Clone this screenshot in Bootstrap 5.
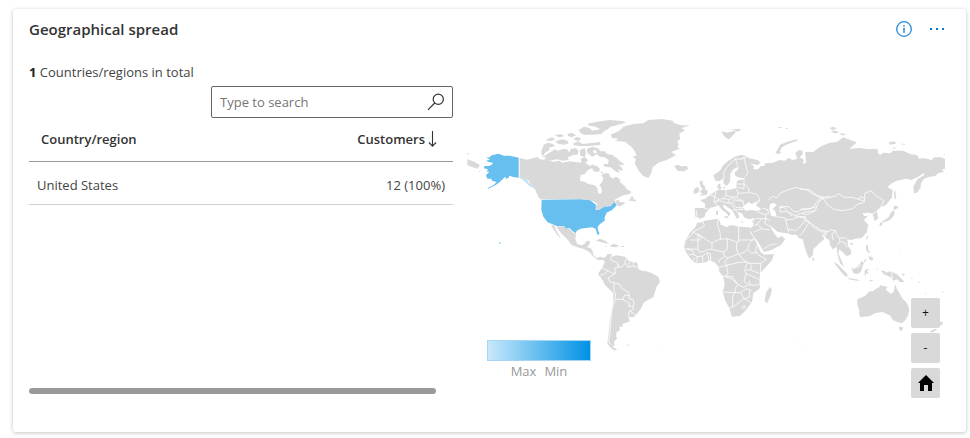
<!DOCTYPE html>
<html lang="en">
<head>
<meta charset="utf-8">
<meta name="viewport" content="width=device-width, initial-scale=1">
<title>Geographical spread</title>
<link href="https://cdn.jsdelivr.net/npm/bootstrap@5.3.0/dist/css/bootstrap.min.css" rel="stylesheet">
<style>
body{font-family:"Open Sans","Noto Sans",sans-serif;font-size:13px;line-height:20px;color:#444;background:#fff}
.geo-card{margin:9px 4px 6px 13px;border:0;border-radius:3px;box-shadow:0 1px 4px rgba(0,0,0,.24)}
.geo-head{padding:0 19px 2px 16px;height:42px}
.geo-title{font-size:15px;line-height:20px;font-weight:600;color:#333}
.head-tools{gap:13px}
.tool-btn{width:20px;height:20px;line-height:0}
.geo-body{padding:0 21px 24px 16px;gap:14px}
.list-pane{flex:424 1 0;padding-top:11px}
.map-pane{flex:478 1 0;padding-top:59px;padding-bottom:48px}
.map-pane .world{display:block;width:100%;height:auto}
.borders{fill:none;stroke:#fbfbfb;stroke-width:2.6}
.total-line{word-spacing:normal}
.total-line strong{color:#222}
.search-box{width:242px;height:32px;border:1px solid #666;border-radius:2px;margin-top:4px;padding:0 7px 0 8px}
.search-box input{border:0;outline:0;background:none;min-width:0;color:#444}
.search-box input::placeholder{color:#767676;opacity:1}
.geo-table{color:#444;margin-bottom:183px}
.geo-table th{font-weight:600;color:#333;padding:11px 12px;height:43px;border-bottom:1px solid #999}
.geo-table th:last-child{padding-right:16px}
.geo-table td{padding:13px 8px 9px;height:43px;border-bottom:1px solid #d0d0d0}
.sort-btn{font-size:13px;line-height:20px;font-weight:600;color:#333;gap:3px;vertical-align:top}
.scroll-thumb{height:6px;width:96%;border-radius:3px;background:#999}
.map-legend{left:20px;bottom:27px;width:104px;color:#999;text-align:center}
.legend-ramp{height:21px;border:1px solid #a5d6f5;background:linear-gradient(90deg,#c8e8fb,#0092e5)}
.map-tools{right:5px;bottom:10px;gap:5px}
.map-tools button{width:29px;height:30px;border:0;border-radius:2px;background:#d9d9d9;color:#111;font-size:12px;padding:0}
</style>
<script src="https://cdn.jsdelivr.net/npm/bootstrap@5.3.0/dist/js/bootstrap.bundle.min.js"></script>
</head>
<body>
<main class="card geo-card">
  <header class="geo-head d-flex align-items-center justify-content-between">
    <h1 class="geo-title mb-0">Geographical spread</h1>
    <div class="d-flex head-tools">
      <button type="button" class="btn p-0 border-0 tool-btn" aria-label="Information">
        <svg width="18" height="18" viewBox="0 0 18 18" fill="none" stroke="#2488d8"><circle cx="9" cy="9" r="7.3" stroke-width="1.3"/><path d="M9 7.7v5M9 5v1.5" stroke-width="1.5"/></svg>
      </button>
      <button type="button" class="btn p-0 border-0 tool-btn" aria-label="More options">
        <svg width="18" height="18" viewBox="0 0 18 18" fill="#0078d4"><path d="M2 8h2v2H2zM8 8h2v2H8zM14 8h2v2h-2z"/></svg>
      </button>
    </div>
  </header>
  <div class="geo-body d-flex">
    <section class="list-pane">
      <p class="mb-0 total-line"><strong>1</strong> Countries/regions in total</p>
      <div class="search-box d-flex align-items-center ms-auto">
        <input type="search" class="flex-grow-1 p-0" placeholder="Type to search" aria-label="Search countries">
        <svg width="18" height="18" viewBox="0 0 18 18" fill="none" stroke="#333" stroke-width="1.2" aria-hidden="true"><circle cx="11.3" cy="6.2" r="5.1"/><path d="M7.7 10 1 16.8"/></svg>
      </div>
      <table class="w-100 geo-table">
        <thead><tr><th scope="col">Country/region</th><th scope="col" class="text-end"><button type="button" class="btn p-0 border-0 sort-btn d-inline-flex align-items-center">Customers <svg width="9" height="18" viewBox="0 0 9 18" fill="none" stroke="#333" stroke-width="1.1" aria-hidden="true"><path d="M4.5 1v15M1 12.5l3.5 3.7L8 12.5"/></svg></button></th></tr></thead>
        <tbody><tr><td>United States</td><td class="text-end">12 (100%)</td></tr></tbody>
      </table>
      <div class="scroll-thumb"></div>
    </section>
    <section class="map-pane position-relative">
      <svg class="world" viewBox="467 110 478 250" role="img" aria-label="World map of customers" fill="#d9d9d9" stroke-linejoin="round">
        <!-- North America -->
        <g transform="translate(460 110) scale(.33333)">
          <path d="M22 148 40 154 60 166 52 176 34 170 22 166ZM22 130l8 2-8 2Z"/>
          <path d="M179 143 200 149 232 141 240 148 262 150 280 155 300 152 306 158 330 154 350 157 365 158 362 146 374 142 385 150 376 158 390 168 400 162 402 172 384 180 374 192 362 195 360 212 375 216 385 222 404 226 412 234 414 248 420 252 426 246 424 234 418 226 428 214 430 204 424 196 436 188 448 192 450 200 460 206 468 200 478 206 482 218 496 230 498 236 515 246 508 252 490 256 478 262 466 268 464 274 480 268 476 276 490 276 496 280 478 290 470 284 466 274 456 286 430 292 410 302 408 290 412 282 400 274 385 270 362 267 246 267 232 254 226 240 214 226 204 210 190 206 179 204Z"/>
          <path d="M236 256l10 8-2 5-10-8ZM506 272l10-14 4 4-1 5 8 2 1 6-8-2Z"/>
          <path d="M356 60 372 50 388 54 398 62 420 58 408 50 382 46 388 40 420 34 450 30 492 34 496 38 470 46 452 50 440 60 432 64 424 72 400 74 372 74 362 70Z"/>
          <path d="M250 104l14-6 14 4 8 6-22 6-14 2ZM244 122l6-12 14 2 6 8-12 6-10 12-4-6ZM266 130l18-12 10 4 12-4 14-2 8 10 8-2 2 12-14 6 2 8-16 2-20-4-20 4-18-4 6-6-12-2 10-4ZM256 90l20-8 10 6-16 6ZM286 94l22-6 14 4 4 8-12 4-20-2ZM322 72l14-4 12 8-12 6-12-4ZM340 88l10-8 14 6-10 8ZM338 102l16-8 14 8 20-2 32-4 2 8-34 4-30 0-14-2ZM330 118l18-4 8 10-4 10-14 0-8-6ZM360 120l14-6 4 14-4 14-14-6ZM284 76l18-4 12 6-16 4ZM364 148l10-8 4 6-8 6Z"/>
          <path d="M380 116 398 110 416 116 420 124 436 124 440 132 456 134 470 144 480 154 494 164 482 166 474 162 486 174 488 184 474 178 480 190 466 184 452 172 434 170 430 162 444 162 446 150 434 142 420 140 410 132 398 140 388 134 382 128ZM396 170l12-4 12 10-4 10-16-2ZM420 184l10 2-4 6Z"/>
          <path fill="#fff" d="M398 122l10-2 2 8-8 2ZM402 144l8 2-4 6Z"/>
          <path d="M272 344 282 346 290 364 302 384 296 380 280 358ZM278 343 290 349 312 349 319 357 328 356 337 366 348 372 346 388 352 402 362 406 374 402 378 394 390 392 388 404 380 412 392 414 398 424 400 436 410 444 420 440 432 444 440 448 430 450 414 450 400 440 388 426 370 416 358 414 334 404 324 390 302 368 288 348Z"/>
          <path d="M408 392 420 386 438 394 448 402 430 398ZM452 404l12-2 14 6-12 4-14-2ZM484 408l8 0 0 3-8 0ZM434 408l8 2-4 2Z"/>
          <g fill="#66bfef"><path d="M77 141 86 143 96 136 115 131 132 137 150 137 176 143V203L160 201 148 197 146 203 138 207 136 200 128 208 117 218 102 228 84 236 83 234 100 226 110 216 96 212 94 206 82 206 78 195 88 186 80 184 84 178 72 175 73 168 88 168 98 162 98 158 86 156 78 152 90 149Z"/>
          <path d="M245 269 362 268 390 271 408 284 407 300 416 300 432 291 452 288 464 276 470 286 456 300 440 308 434 322 434 332 420 342 413 350 414 360 419 372 412 374 407 356 396 352 378 354 362 356 350 362 348 370 338 364 328 354 318 356 312 348 290 348 274 341 262 336 250 320 244 300Z"/>
          <path d="M118 396l4 2-2 4-3-2ZM57 183l3 1-2 2Z"/></g>
          <path fill="#bfe3f8" d="M180 204 200 208 206 218 218 228 220 234 208 228 192 212Z"/>
          <path transform="translate(390 0)" d="M62 74 88 62 100 50 130 42 160 40 175 30 215 27 250 32 250 38 272 46 300 46 275 54 285 62 268 70 270 88 262 94 266 104 262 110 268 116 244 126 258 136 230 150 205 158 188 172 184 190 175 204 160 198 146 182 134 160 138 148 128 140 140 136 132 120 124 110 105 95 76 92 86 86 66 84ZM252 168 264 166 276 170 288 168 294 176 282 184 264 182Z"/>
        </g>
        <!-- Europe and western Asia -->
        <g transform="translate(670 110) scale(.33333)">
          <path d="M130 196 150 182 160 165 175 152 195 140 215 134 232 140 235 144 262 150 272 158 262 166 240 160 252 168 250 178 264 178 272 168 282 168 286 160 310 158 328 150 345 152 355 144 370 150 382 146 376 130 386 120 398 122 398 134 388 140 402 150 398 162 408 158 406 126 430 126 440 118 455 108 480 98V384L462 378 462 388 450 398 430 418 428 436 418 446 412 434 402 405 398 388 386 384 380 374 366 374 350 370 324 366 304 350 298 345 304 356 314 372 324 384 334 378 346 388 332 406 304 420 282 426 268 402 246 372 240 354 250 348 250 335 254 324 236 328 222 322 216 310 210 308 202 306 208 320 202 328 194 314 186 300 170 290 164 284 158 288 166 298 182 310 176 320 170 310 154 298 146 286 134 290 120 294 116 300 106 310 104 320 92 326 76 320 74 294 104 294 106 282 90 270 106 266 112 260 128 250 138 242 150 240 168 240 198 234 200 216 205 210 216 209 206 204 190 192 180 204 182 214 172 226 168 228 160 218 158 206 148 214 136 212Z"/>
          <path fill="#fff" d="M182 204 180 192 190 178 206 170 204 178 194 188 196 200 212 203 228 205 216 209 204 208 198 220 200 234 190 236 172 240 166 228 178 224ZM226 302 218 290 226 284 236 276 246 282 256 276 262 280 258 286 274 298 262 304 244 300ZM300 282 312 278 320 286 308 296 316 304 320 320 304 318 298 300Z"/>
          <path d="M143 224l8-4 0 8 4 8-8 4-5-8ZM158 232l8-2-2 8ZM88 214 98 212 98 222 104 228 106 238 114 244 110 254 88 258 98 250 88 246 98 238 92 230ZM74 236l8-6 6 8-4 10-12 4-2-8ZM14 168 24 164 32 170 50 168 54 176 42 184 24 182ZM154 64l18 4 20-6 6 4-8 8-12 14-10-4-8-8ZM184 58l30-1-10 8ZM316 130 324 116 330 104 350 96 380 88 382 92 354 102 336 112 330 122 334 130 322 132ZM160 320l14-2-2 8ZM138 302l6 0 0 14-6-2ZM212 334l12 2-8 2ZM244 334l8-3-4 5ZM326 52h10v2h-10ZM346 54h8v2h-8Z"/>
          <path class="borders" d="M158 218 162 200 160 190 170 172 184 158 196 146 210 148 232 140M196 146 204 170M210 148 222 142 228 170 234 188 226 200M222 204 222 222 236 234 236 246 262 254 270 270 256 278M200 222 222 222M204 232 222 236 222 222M200 236 204 250 236 248M168 240 168 256 182 260 200 262 204 250M138 244 134 260 146 268 160 266 168 256M118 254 134 260 132 274 150 272M132 274 140 286M78 300 82 322M102 294 118 300M146 268 140 278M160 266 176 268 190 264 196 270 184 280 166 278 150 272M196 270 220 274 222 286 220 294 198 292 190 280M184 280 190 292 202 306M190 300 220 298M200 262 220 274M176 268 178 280M270 270 262 280M276 294 292 298 296 310 286 314 262 306M286 314 288 326 256 326M288 326 284 340 302 350M274 328 262 342 252 346M262 342 276 356 300 360M276 356 252 366M288 326 300 332M324 366 322 384M282 416 302 404 320 402M296 270 308 258 320 264 330 250 352 240 378 232 400 238 420 240 440 256 462 262 446 276 440 290 420 296 396 296 386 306 370 304 356 290 330 290 330 306M330 306 350 304 376 318 392 310 410 314 436 302 440 290M320 320 346 324 352 352 356 368M346 330 368 328 388 320 406 320 404 332 392 348 380 362 354 358M388 320 376 318M404 332 418 336 408 352 398 368 388 378M418 336 428 344 452 360 480 366M436 302 398 308M328 292 342 292 366 318M464 368 458 384M462 262 480 258"/>
        </g>
        <!-- Eastern Asia -->
        <g transform="translate(800 110) scale(.33333)">
          <path d="M89 98 110 96 130 82 168 96 168 100 148 116 180 114 205 118 232 116 234 128 240 136 250 128 272 130 278 122 310 122 330 132 352 136 358 146 370 144 396 150 402 142 424 142 435 148V176L426 178 432 186 415 190 405 198 390 200 372 206 362 222 362 234 350 248 342 250 340 230 352 208 374 194 370 190 355 200 335 210 320 206 290 212 275 220 262 232 278 240 276 262 258 285 242 292 230 302 235 325 224 334 218 312 208 308 188 310 192 318 204 318 192 330 205 345 200 368 185 384 166 386 154 390 142 388 144 408 154 422 152 434 140 438 130 428 118 418 115 430 128 460 132 470 120 460 112 430 110 410 98 418 90 405 88 390 76 384 89 360Z"/>
          <path d="M286 240l2 22 2 4-6 0-2-18ZM282 288l10 0 4 4-12 8-4-4ZM276 304l8-2-2 14-12 14-16 6-14 2 14-8 12-8 4-10ZM240 338l8 2-4 8-6-2ZM88 54l14-4 8 6-12 4ZM92 62l18 0 6 6-14 2ZM120 70l14 1 4 4-14 1ZM266 98l12-4 12 4-6 4-14 2ZM302 101l14 0-2 3-10-1ZM278 112l12 2-10 2ZM152 398l8 2-4 6-6-3ZM202 376l3 2-4 12-3-4ZM433 131l3 0 0 4-3-1Z"/>
          <path class="borders" d="M0 238 20 238 38 252 64 264 82 264 108 258 114 250 132 262 158 262 176 268 194 274 184 280 174 282 158 296 128 302 102 298 82 284 74 270 64 264 48 278 40 292 18 300 0 298M194 274 194 250 214 242 226 256 252 272 244 286 242 294M176 268 180 260 194 264M216 312 228 306M0 322 14 324 30 338 38 350 66 366 80 366 92 360 106 362 110 374 118 384 140 384M66 376 78 374 80 366M106 362 96 374 100 390M118 384 120 396 132 396 142 412M120 396 112 404"/>
        </g>
        <!-- South-east Asia and Oceania -->
        <g transform="translate(790 210) scale(.33333)">
          <path d="M202 268 225 258 238 244 248 244 258 236 268 232 270 226 292 230 288 240 304 252 312 242 315 222 320 236 328 248 336 264 350 278 358 296 354 318 346 330 336 340 322 336 308 330 300 316 290 312 278 306 255 310 240 318 212 322 208 316 208 300 202 285ZM326 350l14 2-4 10-6 0ZM452 334l8 4-6 8-8 2ZM420 364l14-8 8 2-16 10Z"/>
          <path d="M66 140l8 8-2 5-4-3ZM130 156l12 6 16 16 14 14 0 10-12-8-14-18ZM174 204l18 2 16 4-2 3-30-5ZM184 174l10 2 16-14 4-10 8 6-4 10-6 18-8 6-14-2ZM224 182l4-4 12-2-10 6 6 8-4 2-4-4 0 10-4-4ZM228 104l6 2 0 14 8 6-8 2-6-10ZM234 138l4 2 8 0 4 6-4 6-8-4ZM226 146l4 4-8 8 0-4ZM272 182l12 0 4 6 12-4 20 8 16 16 8 8-14 0-8-8-14 4-4-10-20-8ZM240 210l12 0-14 6ZM260 174l3 0-2 10ZM334 188l12 6-6 4ZM360 200l10 6-4 0ZM384 214l8 4-4 1ZM454 246l10-3-4 4ZM402 246l8 7-3 0ZM23 391l5 2-3 1ZM38 408l5 1-3 1ZM328 120l5 1-3 1Z"/>
          <path class="borders" d="M186 174 208 170 214 162M304 184 308 206"/>
        </g>
        <!-- Africa -->
        <g transform="translate(670 210) scale(.33333)">
          <path d="M98 36 104 32 145 26 150 36 152 44 172 52 178 46 190 46 205 50 238 52 244 62 240 66 252 84 262 105 272 126 282 134 312 132 306 150 285 175 270 190 268 215 270 235 250 250 246 275 228 300 210 318 186 320 178 295 165 270 158 245 164 225 160 200 148 185 146 170 135 158 118 150 110 156 80 160 66 152 50 130 42 115 46 92 62 65 76 52 82 38ZM300 230 306 240 302 256 292 280 284 274 288 248Z"/>
          <path class="borders" d="M98 36 104 48 84 58 68 66 68 72 46 92M68 66 96 82 88 90 60 90M84 72 84 118 50 116M84 72 126 100 132 96 148 88 172 86 200 96 200 120 208 136 220 150 238 160 272 160 290 148 264 134 256 124 262 104M145 26 142 42 150 68 152 88M206 50V90H252M200 96H206V90M126 100 126 118 112 118 104 124 88 126 84 118M126 118 160 126 164 140 150 148 146 158M160 126 172 118 172 86M164 140 174 144 204 132M174 144 164 156 170 166 204 158 220 156 238 160M170 166 148 172M170 166 174 192 164 200 188 208 192 214 202 220M160 198 188 200 192 208 204 224 220 232 236 224 222 214 228 190 224 180 230 162M228 190 266 208M238 160 244 166 242 180 268 190M272 160 272 190M228 180 242 180M158 246 194 248 212 248 228 236 238 238 238 262 222 266 212 248M194 248 188 260 188 292 178 294M188 292 206 278 222 266M222 266 242 278M236 224 250 226 266 224M238 212 240 224M240 238 248 246M204 224 196 234 196 248M42 116 54 118 68 122 72 134 56 134M72 134 82 140 80 158M82 140 98 138 98 156M98 138 112 128 116 148M112 128 122 132 122 152M66 152 76 144M252 84 238 100 232 120 246 130 262 126M232 120 206 136M216 290l8 -4 3 6-7 4Z"/>
        </g>
        <!-- South America -->
        <g transform="translate(580 230) scale(.33333)">
          <path d="M70 84 78 80 82 72 96 72 94 80 110 76 135 80 146 92 160 96 172 98 176 118 186 122 200 124 216 130 235 140 240 155 230 170 224 188 220 202 200 212 190 220 184 234 172 250 160 262 145 260 150 274 128 282 128 290 118 290 120 300 110 306 108 318 112 326 102 334 104 344 98 352 112 358 104 362 90 352 82 340 86 310 90 270 100 215 100 190 75 165 66 148 56 135 56 128 66 114 74 98ZM138 344l10 0-2 3-6-1ZM232 358l5 2-4 0Z"/>
          <path class="borders" d="M94 76 92 90 112 98 116 112 104 114 106 130 84 144 90 156 102 158 102 182 106 192 106 206 96 240 92 280 90 310 86 336 96 346M66 114 84 122 98 130 106 130M60 136 74 132 84 122M112 106 124 112 136 100 134 92 144 84M136 100 142 112 158 108 174 112M148 94 146 110M160 96 160 108M102 158 118 162 124 174 144 186 148 196 134 196 128 208 106 208M128 208 150 222 144 228 158 230 162 222 160 210 148 206 148 196M158 230 162 236 148 244 144 260M148 242 166 254"/>
        </g>
      </svg>
      <div class="map-legend position-absolute">
        <div class="legend-ramp"></div>
        <div class="d-flex justify-content-center gap-2"><span>Max</span><span>Min</span></div>
      </div>
      <div class="map-tools position-absolute d-flex flex-column">
        <button type="button" aria-label="Zoom in">+</button>
        <button type="button" aria-label="Zoom out">-</button>
        <button type="button" aria-label="Reset map"><svg width="16" height="17" viewBox="0 0 16 17" aria-hidden="true"><path d="M8 0 16 8H14V16H10V10H6V16H2V8H0Z"/></svg></button>
      </div>
    </section>
  </div>
</main>
</body>
</html>
